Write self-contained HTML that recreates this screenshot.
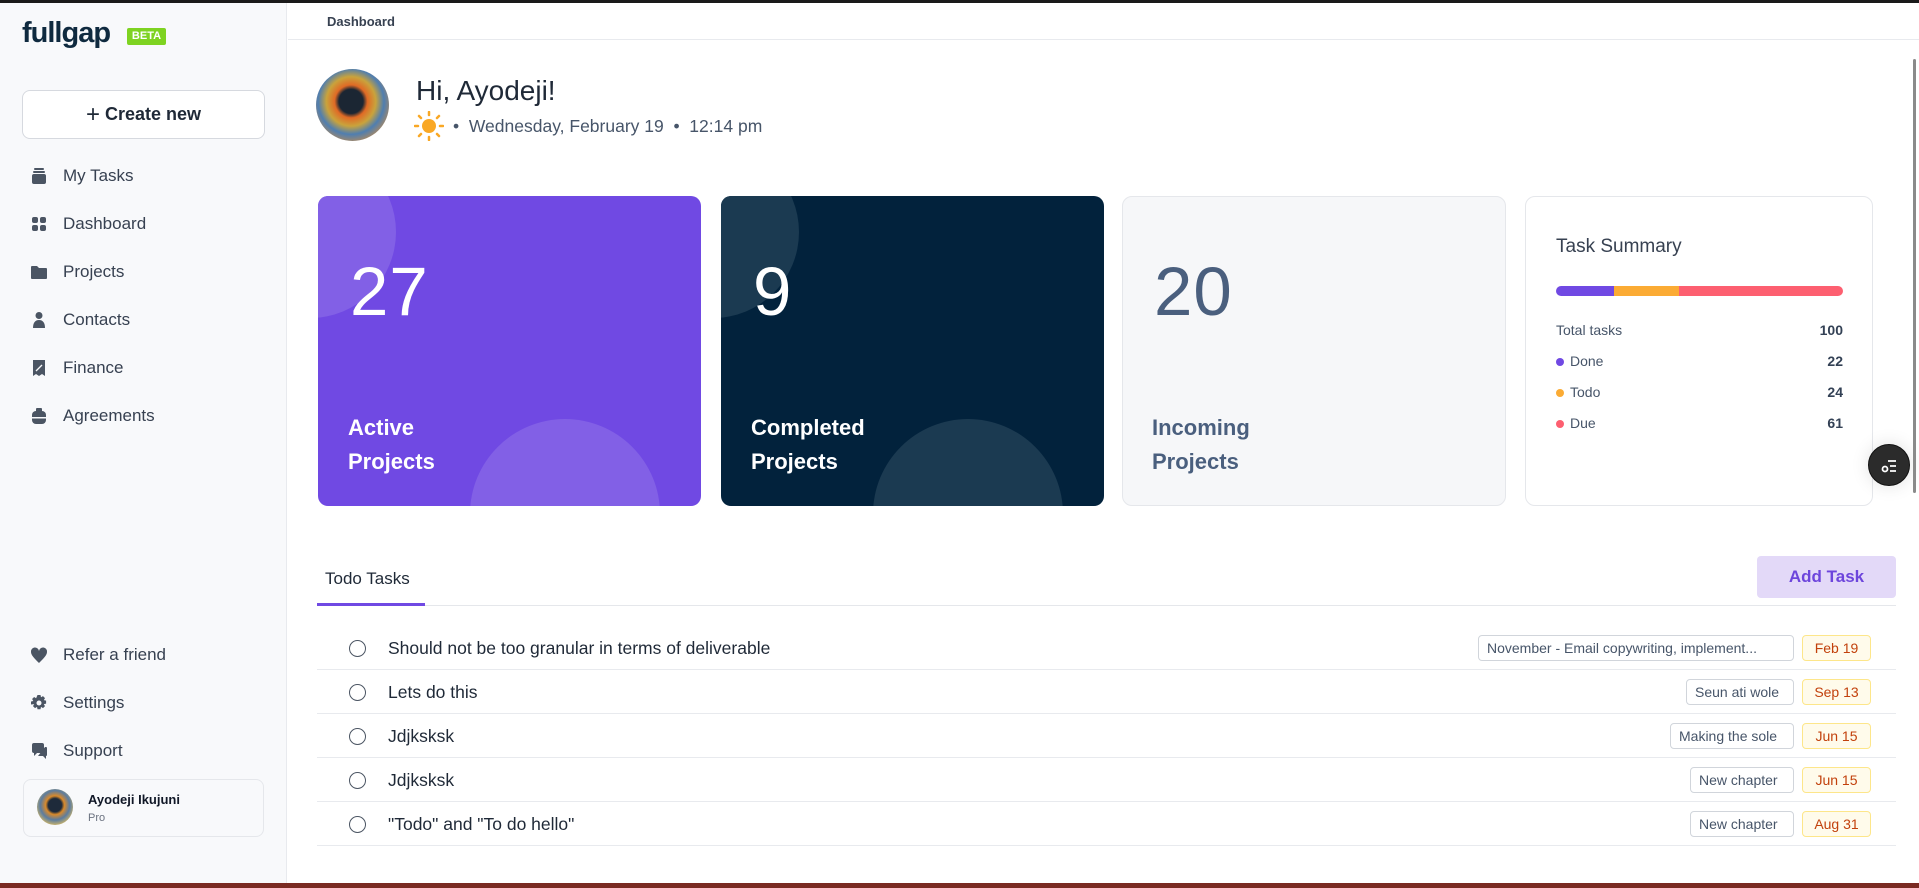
<!DOCTYPE html>
<html><head><meta charset="utf-8"><style>
*{box-sizing:border-box;margin:0;padding:0}
body{width:1919px;height:888px;overflow:hidden;background:#fff;font-family:"Liberation Sans",sans-serif;position:relative;color:#1f2937}
.a{position:absolute}
.side{left:0;top:3px;width:287px;height:880px;background:#f8f9fb;border-right:1px solid #e8eaee}
.nav{left:30px;height:24px;display:flex;align-items:center;font-size:17px;color:#374151}
.nav svg{width:18px;height:18px;margin-right:15px;fill:#4b5563}
.card{border-radius:10px;overflow:hidden}
.circ{position:absolute;border-radius:50%}
.num{position:absolute;left:32px;top:56px;font-size:69px;font-weight:300;letter-spacing:1px}
.lbl{position:absolute;left:30px;top:215px;font-size:22px;font-weight:bold;line-height:34px}
.row{left:317px;width:1579px;height:44px;border-bottom:1px solid #e8eaee}
.row .c{position:absolute;left:32px;top:14px;width:17px;height:17px;border:1.6px solid #4b5563;border-radius:50%}
.row .t{position:absolute;left:71px;top:12px;font-size:17.5px;color:#1f2937}
.tag{position:absolute;top:9px;height:26px;border:1px solid #d1d5db;border-radius:4px;font-size:14px;color:#475569;line-height:24px;padding:0 8px;background:#fff}
.dt{position:absolute;top:9px;left:1485px;width:69px;height:26px;border:1px solid #fde68a;border-radius:4px;background:#fffbeb;font-size:14px;color:#c2410c;line-height:24px;text-align:center}
.sr{left:1556px;width:287px;font-size:14px;color:#475569;display:flex;justify-content:space-between;align-items:center}
.sr b{color:#334155}
.dot{display:inline-block;width:8px;height:8px;border-radius:50%;margin-right:6px}
</style></head><body>
<div class="a" style="left:0;top:0;width:1919px;height:3px;background:#1a1a1a"></div>
<div class="a side"></div>
<div class="a" style="left:22px;top:17px;font-size:29px;font-weight:bold;color:#0f2a3f;letter-spacing:-1px">fullgap</div>
<div class="a" style="left:127px;top:28px;width:39px;height:17px;background:#7ed321;border-radius:2px;color:#fff;font-size:11px;font-weight:bold;text-align:center;line-height:17px">BETA</div>
<div class="a" style="left:22px;top:90px;width:243px;height:49px;background:#fff;border:1px solid #d6d9df;border-radius:8px;text-align:center;line-height:47px;font-size:18px;font-weight:bold;color:#1f2937"><span style="font-weight:normal;font-size:24px;vertical-align:-2px">+</span> Create new</div>

<div class="a nav" style="top:164px"><svg viewBox="0 0 18 18"><rect x="4" y="1" width="10" height="2" rx="1"/><rect x="3" y="4" width="12" height="2" rx="1"/><rect x="2" y="7" width="14" height="10" rx="2"/></svg>My Tasks</div>
<div class="a nav" style="top:212px"><svg viewBox="0 0 18 18"><rect x="2" y="2" width="6" height="6" rx="2"/><rect x="10" y="2" width="6" height="6" rx="2"/><rect x="2" y="10" width="6" height="6" rx="2"/><rect x="10" y="10" width="6" height="6" rx="2"/></svg>Dashboard</div>
<div class="a nav" style="top:260px"><svg viewBox="0 0 18 18"><path d="M1 4a1 1 0 0 1 1-1h5l2 2h7a1 1 0 0 1 1 1v9a1 1 0 0 1-1 1H2a1 1 0 0 1-1-1z"/></svg>Projects</div>
<div class="a nav" style="top:308px"><svg viewBox="0 0 18 18"><circle cx="9" cy="4.5" r="3.5"/><path d="M3 17c0-5 2-8 6-8s6 3 6 8z"/></svg>Contacts</div>
<div class="a nav" style="top:356px"><svg viewBox="0 0 18 18"><path d="M3 1h12v16l-3-2-3 2-3-2-3 2z"/><path d="M6 12l6-6" stroke="#f8f9fb" stroke-width="1.3"/></svg>Finance</div>
<div class="a nav" style="top:404px"><svg viewBox="0 0 18 18"><rect x="6" y="1" width="6" height="4" rx="1"/><rect x="2" y="4" width="14" height="13" rx="4"/><rect x="2" y="10" width="14" height="1.5" fill="#f8f9fb"/></svg>Agreements</div>

<div class="a nav" style="top:643px"><svg viewBox="0 0 18 18"><path d="M9 17C4 12 1 9 1 6a4 4 0 0 1 8-1 4 4 0 0 1 8 1c0 3-3 6-8 11z"/></svg>Refer a friend</div>
<div class="a nav" style="top:691px"><svg viewBox="0 0 18 18"><path d="M7.5 1h3l.5 2.3 2-1.2 2 2-1.2 2 2.3.5v3l-2.3.5 1.2 2-2 2-2-1.2-.5 2.3h-3l-.5-2.3-2 1.2-2-2 1.2-2L1 10.5v-3l2.3-.5-1.2-2 2-2 2 1.2z"/><circle cx="9" cy="9" r="2.5" fill="#f8f9fb"/></svg>Settings</div>
<div class="a nav" style="top:739px"><svg viewBox="0 0 18 18"><path d="M2 3a2 2 0 0 1 2-2h8a2 2 0 0 1 2 2v6a2 2 0 0 1-2 2H7l-3 3v-3a2 2 0 0 1-2-2z"/><path d="M15 5h1a1 1 0 0 1 1 1v7a1 1 0 0 1-1 1v3l-3-3H8"/></svg>Support</div>
<div class="a" style="left:23px;top:779px;width:241px;height:58px;background:#f8f9fb;border:1px solid #e5e7eb;border-radius:8px"></div>
<div class="a" style="left:37px;top:789px;width:36px;height:36px;border-radius:50%;background:radial-gradient(circle at 50% 45%,#1e2a3a 0 25%,#d98a2b 35%,#5b7ca0 55%,#c9b26a 75%,#3a3a3a)"></div>
<div class="a" style="left:88px;top:792px;font-size:13px;font-weight:bold;color:#111827">Ayodeji Ikujuni</div>
<div class="a" style="left:88px;top:812px;font-size:11px;color:#6b7280">Pro</div>

<div class="a" style="left:288px;top:39px;width:1631px;height:1px;background:#e8eaee"></div>
<div class="a" style="left:327px;top:14px;font-size:13px;font-weight:bold;color:#374151">Dashboard</div>

<div class="a" style="left:316px;top:69px;width:73px;height:72px;border-radius:50%;background:radial-gradient(circle at 48% 45%,#1b2633 0 22%,#e06a25 30%,#c9a33c 45%,#4f7eb0 60%,#b98a55 78%,#2f3440)"></div>
<div class="a" style="left:416px;top:75px;font-size:28px;color:#1f2937">Hi, Ayodeji!</div>
<svg class="a" style="left:414px;top:111px" width="30" height="30" viewBox="0 0 30 30"><circle cx="15" cy="15" r="7" fill="#f9a825"/><g stroke="#f9a825" stroke-width="2.5" stroke-linecap="round"><path d="M15 1v3M15 26v3M1 15h3M26 15h3M5 5l2 2M23 23l2 2M5 25l2-2M23 7l2-2"/></g></svg>
<div class="a" style="left:453px;top:116px;font-size:17.5px;color:#475569">•&nbsp;&nbsp;Wednesday, February 19&nbsp;&nbsp;•&nbsp;&nbsp;12:14 pm</div>

<div class="a card" style="left:318px;top:196px;width:383px;height:310px;background:#7049e3">
 <div class="circ" style="left:-94px;top:-50px;width:172px;height:172px;background:#8260e6"></div>
 <div class="circ" style="left:152px;top:223px;width:190px;height:190px;background:#8260e6"></div>
 <div class="num" style="color:#fff">27</div><div class="lbl" style="color:#fff">Active<br>Projects</div></div>
<div class="a card" style="left:721px;top:196px;width:383px;height:310px;background:#02223c">
 <div class="circ" style="left:-94px;top:-50px;width:172px;height:172px;background:#1b3a51"></div>
 <div class="circ" style="left:152px;top:223px;width:190px;height:190px;background:#1b3a51"></div>
 <div class="num" style="color:#fff">9</div><div class="lbl" style="color:#fff">Completed<br>Projects</div></div>
<div class="a card" style="left:1122px;top:196px;width:384px;height:310px;background:#f6f7f9;border:1px solid #e5e7eb">
 <div class="num" style="color:#4a5f7e;left:31px;top:55px">20</div><div class="lbl" style="color:#4a5f7e;left:29px;top:214px">Incoming<br>Projects</div></div>
<div class="a card" style="left:1525px;top:196px;width:348px;height:310px;background:#fff;border:1px solid #e5e7eb"></div>
<div class="a" style="left:1556px;top:236px;font-size:19px;color:#374151">Task Summary</div>
<div class="a" style="left:1556px;top:286px;width:287px;height:10px;border-radius:5px;overflow:hidden;display:flex"><div style="width:58px;background:#7049e3"></div><div style="width:65px;background:#fbab34"></div><div style="flex:1;background:#fd5f70"></div></div>
<div class="a sr" style="top:322px"><span>Total tasks</span><b>100</b></div>
<div class="a sr" style="top:353px"><span><i class="dot" style="background:#7049e3"></i>Done</span><b>22</b></div>
<div class="a sr" style="top:384px"><span><i class="dot" style="background:#fbab34"></i>Todo</span><b>24</b></div>
<div class="a sr" style="top:415px"><span><i class="dot" style="background:#fd5f70"></i>Due</span><b>61</b></div>

<div class="a" style="left:1868px;top:444px;width:42px;height:42px;border-radius:50%;background:#2b2b2b;border:1px solid #111;box-shadow:0 0 18px rgba(0,0,0,.12)"><svg width="42" height="42" viewBox="0 0 42 42"><g stroke="#fff" stroke-width="1.8" fill="none"><circle cx="16" cy="24" r="2.5"/><path d="M19 16h8M21 21h6M21 26h6"/></g></svg></div>
<div class="a" style="left:1913px;top:59px;width:3px;height:434px;background:#8a8a8a;border-radius:2px"></div>

<div class="a" style="left:325px;top:569px;font-size:17px;color:#1f2937">Todo Tasks</div>
<div class="a" style="left:317px;top:605px;width:1579px;height:1px;background:#e5e7eb"></div>
<div class="a" style="left:317px;top:603px;width:108px;height:3px;background:#7049e3"></div>
<div class="a" style="left:1757px;top:556px;width:139px;height:42px;background:#e3d9f8;border-radius:4px;color:#6d45dc;font-size:17px;font-weight:bold;text-align:center;line-height:42px">Add Task</div>

<div class="a row" style="top:626px"><i class="c"></i><span class="t">Should not be too granular in terms of deliverable</span><span class="tag" style="left:1161px;width:316px">November - Email copywriting, implement...</span><span class="dt">Feb 19</span></div>
<div class="a row" style="top:670px"><i class="c"></i><span class="t">Lets do this</span><span class="tag" style="left:1369px;width:108px">Seun ati wole</span><span class="dt">Sep 13</span></div>
<div class="a row" style="top:714px"><i class="c"></i><span class="t">Jdjksksk</span><span class="tag" style="left:1353px;width:124px">Making the sole</span><span class="dt">Jun 15</span></div>
<div class="a row" style="top:758px"><i class="c"></i><span class="t">Jdjksksk</span><span class="tag" style="left:1373px;width:104px">New chapter</span><span class="dt">Jun 15</span></div>
<div class="a row" style="top:802px"><i class="c"></i><span class="t">"Todo" and "To do hello"</span><span class="tag" style="left:1373px;width:104px">New chapter</span><span class="dt">Aug 31</span></div>

<div class="a" style="left:0;top:883px;width:1919px;height:5px;background:#7a2a22"></div>
</body></html>
